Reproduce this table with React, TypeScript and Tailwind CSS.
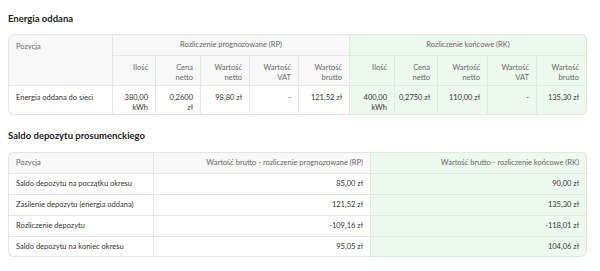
import React from 'react'

const font = { fontFamily: 'Lato, "Noto Sans", sans-serif' }

const sub = ['Ilość', 'Cena netto', 'Wartość netto', 'Wartość VAT', 'Wartość brutto']
const rpW = ['w-[43px]', 'w-[45px]', 'w-[49px]', 'w-[49px]', 'w-[51px]']
const rkW = ['w-[45px]', 'w-[43px]', 'w-[50px]', 'w-[49px]', 'w-[51px]']

const rp = ['380,00 kWh', '0,2600 zł', '98,80 zł', '-', '121,52 zł']
const rk = ['400,00 kWh', '0,2750 zł', '110,00 zł', '-', '135,30 zł']

const saldo = [
  ['Saldo depozytu na początku okresu', '85,00 zł', '90,00 zł'],
  ['Zasilenie depozytu (energia oddana)', '121,52 zł', '135,30 zł'],
  ['Rozliczenie depozytu', '-109,16 zł', '-118,01 zł'],
  ['Saldo depozytu na koniec okresu', '95,05 zł', '104,06 zł'],
]

function Split({ text }: { text: string }) {
  const parts = text.split(' ')
  if (parts.length === 1) return <>{text}</>
  return (
    <>
      {parts[0]}
      <br />
      {parts.slice(1).join(' ')}
    </>
  )
}

export default function App() {
  return (
    <div className="w-[600px] h-[271px] bg-white px-2 pt-[13px] text-[#333]" style={font}>
      <h2 className="text-[9.5px] font-bold text-[#222] leading-[12px]">Energia oddana</h2>
      <table className="mt-[9px] w-[579px] table-fixed border-separate border-spacing-0 text-[7.5px] leading-[10px]">
        <colgroup>
          <col className="w-[104px]" />
          {rpW.map((w, i) => (
            <col key={'a' + i} className={w} />
          ))}
          {rkW.map((w, i) => (
            <col key={'b' + i} className={w} />
          ))}
        </colgroup>
        <thead>
          <tr className="h-[21px]">
            <th
              rowSpan={2}
              className="rounded-tl-[6px] border-l border-t border-[#e4e4e4] bg-[#f8f8f8] px-[7px] pt-[7px] text-left align-top font-normal text-[#666]"
            >
              Pozycja
            </th>
            <th
              colSpan={5}
              className="border-l border-t border-[#e4e4e4] bg-[#f8f8f8] text-center align-middle font-normal text-[#666]"
            >
              Rozliczenie prognozowane (RP)
            </th>
            <th
              colSpan={5}
              className="rounded-tr-[6px] border-l border-r border-t border-[#d8ecdc] bg-[#edf9ef] text-center align-middle font-normal text-[#666]"
            >
              Rozliczenie końcowe (RK)
            </th>
          </tr>
          <tr className="h-[30px]">
            {sub.map((s, i) => (
              <th
                key={'rp' + i}
                className="border-l border-t border-[#e4e4e4] bg-[#f8f8f8] px-[7px] pt-[7px] text-right align-top font-normal text-[#666]"
              >
                <Split text={s} />
              </th>
            ))}
            {sub.map((s, i) => (
              <th
                key={'rk' + i}
                className={
                  'border-l border-t border-[#d8ecdc] bg-[#edf9ef] px-[7px] pt-[7px] text-right align-top font-normal text-[#666] ' +
                  (i === 4 ? 'border-r' : '')
                }
              >
                <Split text={s} />
              </th>
            ))}
          </tr>
        </thead>
        <tbody>
          <tr className="h-[30px]">
            <td className="rounded-bl-[6px] border-b border-l border-t border-[#e4e4e4] px-[7px] pt-[7px] align-top">
              Energia oddana do sieci
            </td>
            {rp.map((v, i) => (
              <td
                key={'v' + i}
                className="border-b border-l border-t border-[#e4e4e4] px-[7px] pt-[7px] text-right align-top"
              >
                {i <= 1 ? <Split text={v} /> : v}
              </td>
            ))}
            {rk.map((v, i) => (
              <td
                key={'k' + i}
                className={
                  'border-b border-l border-t border-[#d8ecdc] bg-[#edf9ef] pl-[4px] pr-[7px] pt-[7px] text-right align-top whitespace-nowrap ' +
                  (i === 4 ? 'rounded-br-[6px] border-r' : '')
                }
              >
                {i === 0 ? <Split text={v} /> : v}
              </td>
            ))}
          </tr>
        </tbody>
      </table>

      <h2 className="mt-[15px] text-[9.5px] font-bold text-[#222] leading-[12px]">Saldo depozytu prosumenckiego</h2>
      <table className="mt-[10px] w-[579px] table-fixed border-separate border-spacing-0 text-[7.5px] leading-[10px]">
        <colgroup>
          <col className="w-[145px]" />
          <col className="w-[217px]" />
          <col className="w-[217px]" />
        </colgroup>
        <thead>
          <tr className="h-[21px]">
            <th className="rounded-tl-[6px] border-l border-t border-[#e4e4e4] bg-[#f8f8f8] px-[7px] text-left align-middle font-normal text-[#666]">
              Pozycja
            </th>
            <th className="border-l border-t border-[#e4e4e4] bg-[#f8f8f8] px-[7px] text-right align-middle font-normal text-[#666]">
              Wartość brutto - rozliczenie prognozowane (RP)
            </th>
            <th className="rounded-tr-[6px] border-l border-r border-t border-[#d8ecdc] bg-[#edf9ef] px-[7px] text-right align-middle font-normal text-[#666]">
              Wartość brutto - rozliczenie końcowe (RK)
            </th>
          </tr>
        </thead>
        <tbody>
          {saldo.map((r, i) => {
            const last = i === saldo.length - 1
            return (
              <tr key={r[0]} className="h-[21px]">
                <td
                  className={
                    'border-l border-t border-[#e4e4e4] px-[7px] align-middle ' +
                    (last ? 'rounded-bl-[6px] border-b' : '')
                  }
                >
                  {r[0]}
                </td>
                <td
                  className={
                    'border-l border-t border-[#e4e4e4] px-[7px] text-right align-middle ' +
                    (last ? 'border-b' : '')
                  }
                >
                  {r[1]}
                </td>
                <td
                  className={
                    'border-l border-r border-t border-[#d8ecdc] bg-[#edf9ef] px-[7px] text-right align-middle ' +
                    (last ? 'rounded-br-[6px] border-b' : '')
                  }
                >
                  {r[2]}
                </td>
              </tr>
            )
          })}
        </tbody>
      </table>
    </div>
  )
}
